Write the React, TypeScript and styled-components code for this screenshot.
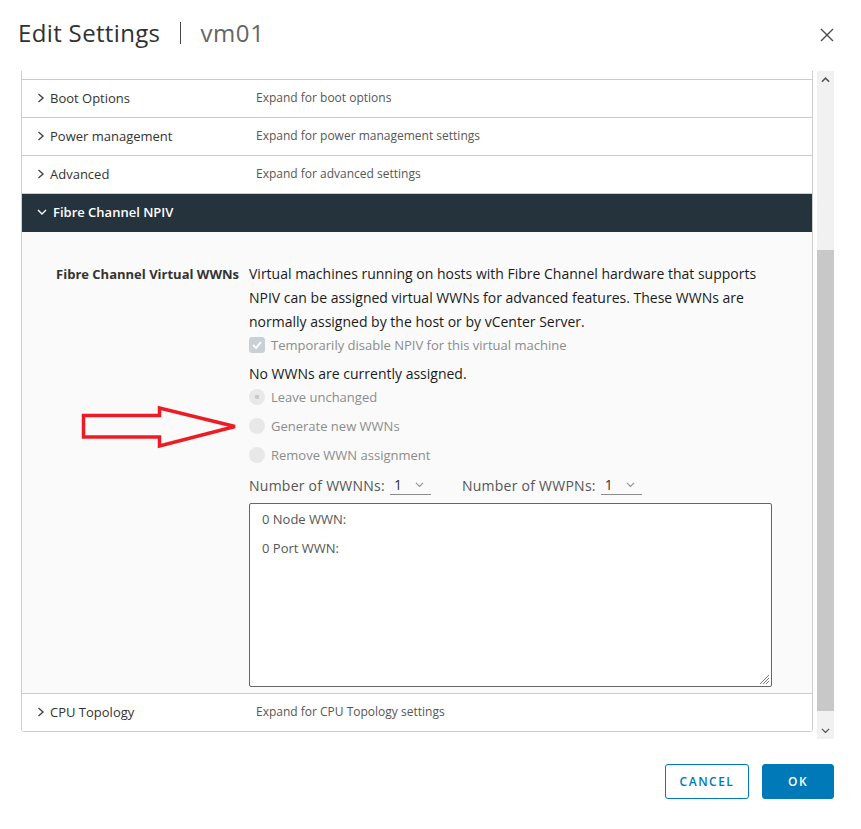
import styled, { createGlobalStyle } from 'styled-components';

const GlobalStyle = createGlobalStyle`
  body {
    margin: 0;
    background: #fff;
    font-family: "Open Sans", Lato, sans-serif;
    color: #333;
  }
`;

const rows = [
  { name: 'Boot Options', hint: 'Expand for boot options' },
  { name: 'Power management', hint: 'Expand for power management settings' },
  { name: 'Advanced', hint: 'Expand for advanced settings' },
];

const radios = ['Leave unchanged', 'Generate new WWNs', 'Remove WWN assignment'];

const ChevronRight = () => (
  <svg width="8" height="10" viewBox="0 0 8 10">
    <polyline points="1.5,1 6,5 1.5,9" fill="none" stroke="#444" strokeWidth="1.4" />
  </svg>
);

const ChevronDown = ({ color = '#fff', size = 10 }: { color?: string; size?: number }) => (
  <svg width={size} height={size * 0.6} viewBox="0 0 10 6">
    <polyline points="1,1 5,5 9,1" fill="none" stroke={color} strokeWidth="1.4" />
  </svg>
);

const App = () => {
  return (
    <>
      <GlobalStyle />
      <Dialog>
        <Header>
          <Title>
            Edit Settings
            <Divider />
            <Sub>vm01</Sub>
          </Title>
          <Close>
            <svg width="14" height="14" viewBox="0 0 14 14">
              <path d="M1 1 L13 13 M13 1 L1 13" stroke="#4a4a4a" strokeWidth="1.4" />
            </svg>
          </Close>
        </Header>

        <ScrollArea>
          <Stack>
            <TopSpacer />
            {rows.map((r) => (
              <Row key={r.name}>
                <RowName>
                  <ChevronRight />
                  {r.name}
                </RowName>
                <RowHint>{r.hint}</RowHint>
              </Row>
            ))}
            <OpenRow>
              <ChevronDown />
              Fibre Channel NPIV
            </OpenRow>
            <Body>
              <FieldLabel>Fibre Channel Virtual WWNs</FieldLabel>
              <Field>
                <Desc>
                  Virtual machines running on hosts with Fibre Channel hardware that supports
                  NPIV can be assigned virtual WWNs for advanced features. These WWNs are
                  normally assigned by the host or by vCenter Server.
                </Desc>
                <CheckRow>
                  <CheckBox>
                    <svg width="10" height="8" viewBox="0 0 10 8">
                      <polyline points="1,4 4,7 9,1" fill="none" stroke="#fff" strokeWidth="1.8" />
                    </svg>
                  </CheckBox>
                  Temporarily disable NPIV for this virtual machine
                </CheckRow>
                <Notice>No WWNs are currently assigned.</Notice>
                <RadioGroup>
                  {radios.map((label, i) => (
                    <RadioRow key={label}>
                      <Radio $checked={i === 0} />
                      {label}
                    </RadioRow>
                  ))}
                </RadioGroup>
                <CountRow>
                  <Count>
                    Number of WWNNs:
                    <Select>
                      1
                      <ChevronDown color="#9a9a9a" size={9} />
                    </Select>
                  </Count>
                  <Count>
                    Number of WWPNs:
                    <Select>
                      1
                      <ChevronDown color="#9a9a9a" size={9} />
                    </Select>
                  </Count>
                </CountRow>
                <WwnBox>
                  <WwnLine>0 Node WWN:</WwnLine>
                  <WwnLine>0 Port WWN:</WwnLine>
                  <Grip>
                    <svg width="12" height="12" viewBox="0 0 12 12">
                      <path d="M11 2 L2 11 M11 5 L5 11 M11 8 L8 11" stroke="#777" strokeWidth="1" />
                    </svg>
                  </Grip>
                </WwnBox>
              </Field>
              <Arrow width="160" height="46" viewBox="80 403 160 46">
                <polygon
                  points="83.5,414.5 159.5,414.5 159.5,407 235,425.5 159.5,445 159.5,436 83.5,436"
                  fill="none"
                  stroke="#ed1c24"
                  strokeWidth="3.5"
                  strokeLinejoin="miter"
                />
              </Arrow>
            </Body>
            <Row>
              <RowName>
                <ChevronRight />
                CPU Topology
              </RowName>
              <RowHint>Expand for CPU Topology settings</RowHint>
            </Row>
          </Stack>
          <Scrollbar>
            <ScrollBtn>
              <svg width="9" height="6" viewBox="0 0 10 6">
                <polyline points="1,5 5,1 9,5" fill="none" stroke="#555" strokeWidth="1.8" />
              </svg>
            </ScrollBtn>
            <Track>
              <Thumb />
            </Track>
            <ScrollBtn>
              <ChevronDown color="#555" size={9} />
            </ScrollBtn>
          </Scrollbar>
        </ScrollArea>

        <Footer>
          <OutlineButton>CANCEL</OutlineButton>
          <SolidButton>OK</SolidButton>
        </Footer>
      </Dialog>
    </>
  );
};

const Dialog = styled.div`
  width: 861px;
  height: 829px;
  display: flex;
  flex-direction: column;
`;

const Header = styled.div`
  height: 71px;
  display: flex;
  align-items: center;
  justify-content: space-between;
  padding: 0 27px 0 18px;
  box-sizing: border-box;
`;

const Title = styled.h1`
  margin: 0 0 6px;
  display: flex;
  align-items: center;
  font-size: 24px;
  font-weight: 400;
  letter-spacing: 0.35px;
  color: #313131;
`;

const Divider = styled.span`
  width: 1px;
  height: 22px;
  background: #444;
  margin: 0 19px 0 20px;
`;

const Sub = styled.span`
  color: #666;
  letter-spacing: 0.6px;
`;

const Close = styled.div`
  display: flex;
  margin-bottom: 2px;
`;

const ScrollArea = styled.div`
  margin-left: 21px;
  width: 813px;
  height: 668px;
  display: flex;
  align-items: flex-start;
  gap: 4px;
`;

const Stack = styled.div`
  flex: 1;
  border-left: 1px solid #ccc;
  border-right: 1px solid #ccc;
  border-radius: 0 0 3px 3px;
  overflow: hidden;
`;

const TopSpacer = styled.div`
  height: 8px;
  border-bottom: 1px solid #ccc;
`;

const Row = styled.div`
  height: 38px;
  box-sizing: border-box;
  display: flex;
  align-items: center;
  border-bottom: 1px solid #ccc;
  background: #fff;
`;

const RowName = styled.div`
  width: 219px;
  padding-left: 15px;
  display: flex;
  align-items: center;
  gap: 5px;
  font-size: 13px;
  color: #333;
  padding-bottom: 2px;
`;

const RowHint = styled.div`
  font-size: 12px;
  color: #565656;
  padding-bottom: 2px;
`;

const OpenRow = styled.div`
  height: 38px;
  box-sizing: border-box;
  background: #25333d;
  color: #fff;
  display: flex;
  align-items: center;
  gap: 6px;
  padding: 0 0 2px 15px;
  font-size: 13px;
  font-weight: 600;
`;

const Body = styled.div`
  position: relative;
  height: 462px;
  box-sizing: border-box;
  border-bottom: 1px solid #ccc;
  background: #fafafa;
  padding: 30px 0 0;
  display: flex;
  gap: 10px;
`;

const FieldLabel = styled.div`
  width: 217px;
  text-align: right;
  font-size: 13px;
  font-weight: 700;
  color: #333;
  line-height: 24px;
`;

const Field = styled.div`
  width: 523px;
  display: flex;
  flex-direction: column;
`;

const Desc = styled.p`
  margin: 0;
  font-size: 14px;
  line-height: 24px;
  color: #1a1a1a;
`;

const CheckRow = styled.div`
  margin-top: 2px;
  height: 18px;
  display: flex;
  align-items: center;
  gap: 6px;
  font-size: 13px;
  color: #8c8c8c;
`;

const CheckBox = styled.span`
  width: 16px;
  height: 16px;
  border-radius: 3px;
  background: #c9d1d6;
  display: flex;
  align-items: center;
  justify-content: center;
`;

const Notice = styled.div`
  margin-top: 10px;
  font-size: 14px;
  line-height: 20px;
  color: #1a1a1a;
`;

const RadioGroup = styled.div`
  margin-top: 1px;
  display: flex;
  flex-direction: column;
  gap: 5px;
`;

const RadioRow = styled.div`
  height: 24px;
  display: flex;
  align-items: center;
  gap: 6px;
  font-size: 13px;
  color: #8c8c8c;
`;

const Radio = styled.span<{ $checked?: boolean }>`
  width: 16px;
  height: 16px;
  border-radius: 50%;
  background: ${(p) => (p.$checked ? 'radial-gradient(circle, #c4ccd2 0 2px, #e8e8e8 2.5px)' : '#e8e8e8')};
`;

const CountRow = styled.div`
  margin-top: 6px;
  height: 24px;
  display: flex;
  gap: 31px;
`;

const Count = styled.div`
  display: flex;
  align-items: center;
  gap: 5px;
  font-size: 14px;
  letter-spacing: 0.25px;
  color: #565656;
`;

const Select = styled.div`
  width: 41px;
  height: 20px;
  box-sizing: border-box;
  border-bottom: 1px solid #8c8c8c;
  display: flex;
  align-items: center;
  justify-content: space-between;
  padding: 0 7px 0 4px;
  color: #333;
`;

const WwnBox = styled.div`
  position: relative;
  margin-top: 6px;
  height: 184px;
  box-sizing: border-box;
  border: 1px solid #666;
  border-radius: 2px;
  background: #fff;
  padding: 1px 12px;
`;

const WwnLine = styled.div`
  font-size: 13px;
  line-height: 29px;
  color: #565656;
`;

const Grip = styled.div`
  position: absolute;
  right: 1px;
  bottom: 1px;
  display: flex;
`;

const Arrow = styled.svg`
  position: absolute;
  left: 58px;
  top: 172px;
`;

const Scrollbar = styled.div`
  width: 17px;
  height: 668px;
  background: #f1f1f1;
  display: flex;
  flex-direction: column;
`;

const ScrollBtn = styled.div`
  height: 17px;
  display: flex;
  align-items: center;
  justify-content: center;
`;

const Track = styled.div`
  flex: 1;
  padding: 162px 0 11px;
  display: flex;
`;

const Thumb = styled.div`
  flex: 1;
  background: #c8c8c8;
`;

const Footer = styled.div`
  display: flex;
  justify-content: flex-end;
  gap: 13px;
  padding: 25px 27px 0 0;
`;

const buttonBase = `
  height: 35px;
  box-sizing: border-box;
  border-radius: 3px;
  font-family: "Open Sans", Lato, sans-serif;
  font-size: 12px;
  font-weight: 600;
  letter-spacing: 1.5px;
  cursor: pointer;
`;

const OutlineButton = styled.button`
  ${buttonBase}
  width: 84px;
  border: 1px solid #0079b8;
  background: #fff;
  color: #0079b8;
`;

const SolidButton = styled.button`
  ${buttonBase}
  width: 72px;
  border: 1px solid #0079b8;
  background: #0079b8;
  color: #fff;
`;

export default App;
